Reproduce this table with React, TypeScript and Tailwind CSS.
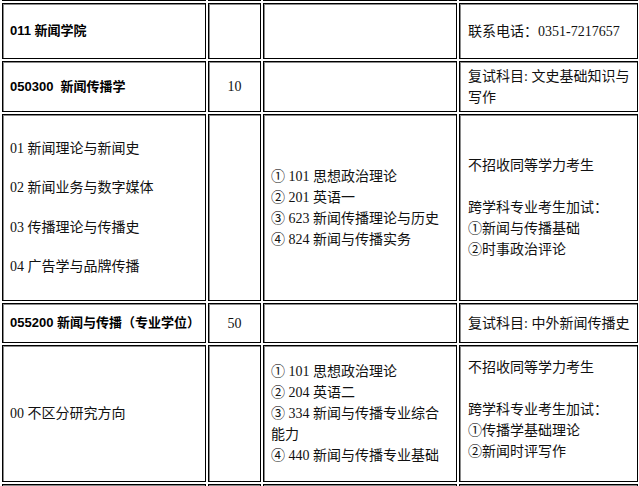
const serif = "font-['Liberation_Serif','Noto_Sans_CJK_SC',serif] text-[14px] leading-[21px] text-[#111]";
const bold = "font-['Liberation_Sans','Noto_Sans_CJK_SC',sans-serif] font-bold text-[13px] leading-[20px] text-black";
const cell = "border border-black shadow-[inset_1px_1px_0_#8a8a8a] align-middle p-0";

function Lines({ items }: { items: string[] }) {
  return (
    <div className="flex flex-col">
      {items.map((t, i) => (
        <div key={i} className="whitespace-nowrap">
          {t === "" ? "\u00a0" : t}
        </div>
      ))}
    </div>
  );
}

export default function App() {
  return (
    <div className="w-[639px] h-[486px] overflow-hidden bg-white">
      <table className="-mt-[41px] w-[640px] table-fixed border-separate border-spacing-[2px]">
        <colgroup>
          <col className="w-[204px]" />
          <col className="w-[53px]" />
          <col className="w-[194px]" />
          <col className="w-[179px]" />
        </colgroup>
        <tbody>
          {/* previous row, scrolled off */}
          <tr className="h-[40px]">
            <td className={cell}></td>
            <td className={cell}></td>
            <td className={cell}></td>
            <td className={cell}></td>
          </tr>

          {/* 011 */}
          <tr className="h-[56px]">
            <td className={`${cell} pl-[7px] ${bold}`}>011 新闻学院</td>
            <td className={cell}></td>
            <td className={cell}></td>
            <td className={`${cell} pl-[8px] ${serif}`}>联系电话：0351-7217657</td>
          </tr>

          {/* 050300 */}
          <tr className="h-[51px]">
            <td className={`${cell} pl-[7px] ${bold} whitespace-pre`}>050300  新闻传播学</td>
            <td className={`${cell} text-center ${serif}`}>10</td>
            <td className={cell}></td>
            <td className={`${cell} pl-[8px] ${serif}`}>
              <Lines items={["复试科目: 文史基础知识与", "写作"]} />
            </td>
          </tr>

          <tr className="h-[187px]">
            <td className={`${cell} pl-[7px] ${serif}`}>
              <div className="flex flex-col gap-[18.6px]">
                <div>01 新闻理论与新闻史</div>
                <div>02 新闻业务与数字媒体</div>
                <div>03 传播理论与传播史</div>
                <div>04 广告学与品牌传播</div>
              </div>
            </td>
            <td className={cell}></td>
            <td className={`${cell} pl-[7px] ${serif}`}>
              <Lines
                items={[
                  "① 101 思想政治理论",
                  "② 201 英语一",
                  "③ 623 新闻传播理论与历史",
                  "④ 824 新闻与传播实务",
                ]}
              />
            </td>
            <td className={`${cell} pl-[8px] ${serif}`}>
              <Lines
                items={[
                  "不招收同等学力考生",
                  "",
                  "跨学科专业考生加试：",
                  "①新闻与传播基础",
                  "②时事政治评论",
                ]}
              />
            </td>
          </tr>

          {/* 055200 */}
          <tr className="h-[40px]">
            <td className={`${cell} pl-[7px] ${bold}`}>055200 新闻与传播（专业学位）</td>
            <td className={`${cell} text-center ${serif}`}>50</td>
            <td className={cell}></td>
            <td className={`${cell} pl-[8px] ${serif}`}>复试科目: 中外新闻传播史</td>
          </tr>

          <tr className="h-[137px]">
            <td className={`${cell} pl-[7px] ${serif}`}>00 不区分研究方向</td>
            <td className={cell}></td>
            <td className={`${cell} pl-[7px] ${serif}`}>
              <Lines
                items={[
                  "① 101 思想政治理论",
                  "② 204 英语二",
                  "③ 334 新闻与传播专业综合",
                  "能力",
                  "④ 440 新闻与传播专业基础",
                ]}
              />
            </td>
            <td className={`${cell} pl-[8px] pb-[8px] ${serif}`}>
              <Lines
                items={[
                  "不招收同等学力考生",
                  "",
                  "跨学科专业考生加试：",
                  "①传播学基础理论",
                  "②新闻时评写作",
                ]}
              />
            </td>
          </tr>

          {/* next row, cut off */}
          <tr className="h-[40px]">
            <td className={cell}></td>
            <td className={cell}></td>
            <td className={cell}></td>
            <td className={cell}></td>
          </tr>
        </tbody>
      </table>
    </div>
  );
}
